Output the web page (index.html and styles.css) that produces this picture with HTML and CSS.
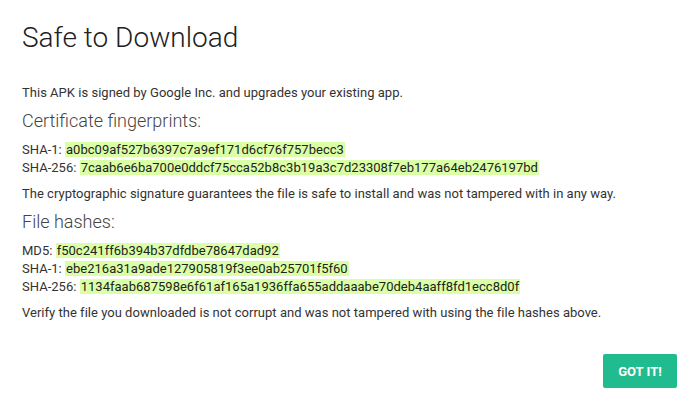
FILE: index.html
```html
<!DOCTYPE html>
<html lang="en">
<head>
    <meta charset="UTF-8">
    <meta name="viewport" content="width=device-width, initial-scale=1.0">
    <title>Safe to Download</title>
    <link rel="stylesheet" href="styles.css">
</head>
<body>

    <div class="dialog">
        <!-- Title -->
        <h1 class="title">Safe to Download</h1>

        <p class="intro">This APK is signed by Google Inc. and upgrades your existing app.</p>

        <!-- Certificate fingerprints -->
        <h3>Certificate fingerprints:</h3>
        <div class="hashes">
            <div>SHA-1: <span class="hash">a0bc09af527b6397c7a9ef171d6cf76f757becc3</span></div>
            <div>SHA-256: <span class="hash">7caab6e6ba700e0ddcf75cca52b8c3b19a3c7d23308f7eb177a64eb2476197bd</span></div>
        </div>
        <p>The cryptographic signature guarantees the file is safe to install and was not tampered with in any way.</p>

        <!-- File hashes -->
        <h3>File hashes:</h3>
        <div class="hashes">
            <div>MD5: <span class="hash">f50c241ff6b394b37dfdbe78647dad92</span></div>
            <div>SHA-1: <span class="hash">ebe216a31a9ade127905819f3ee0ab25701f5f60</span></div>
            <div>SHA-256: <span class="hash">1134faab687598e6f61af165a1936ffa655addaaabe70deb4aaff8fd1ecc8d0f</span></div>
        </div>
        <p>Verify the file you downloaded is not corrupt and was not tampered with using the file hashes above.</p>

        <div class="actions">
            <button class="ok-btn">GOT IT!</button>
        </div>
    </div>

</body>
</html>
```

FILE: styles.css
```css
/* General reset */
* {
    margin: 0;
    padding: 0;
    box-sizing: border-box;
}

body {
    width: 700px;
    height: 408px;
    background-color: #ffffff;
    font-family: Roboto, 'Liberation Sans', Arial, sans-serif;
    color: #333;
    overflow: hidden;
}

/* Dialog */
.dialog {
    display: flex;
    flex-direction: column;
    padding: 21px 23px 20px 22px;
    height: 100%;
}

.title {
    font-size: 28px;
    font-weight: 300;
    color: #212121;
    margin-bottom: 30px;
}

p,
.hashes {
    font-size: 13px;
    line-height: 18px;
    letter-spacing: 0.02px;
}

.hashes {
    margin-bottom: 8px;
}

h3 {
    font-size: 18px;
    font-weight: 300;
    line-height: 24px;
    color: #444;
    margin: 7px 0 8px;
}

.hash {
    background-color: #dbffa6;
    color: #222;
    padding: 0 1px;
}

/* Footer button */
.actions {
    display: flex;
    justify-content: flex-end;
    margin-top: auto;
}

.ok-btn {
    background-color: #20bc8f;
    color: #ffffff;
    border: none;
    border-radius: 2px;
    width: 74px;
    height: 34px;
    font-family: Roboto, 'Liberation Sans', Arial, sans-serif;
    font-size: 13px;
    font-weight: 700;
    cursor: pointer;
}
```
